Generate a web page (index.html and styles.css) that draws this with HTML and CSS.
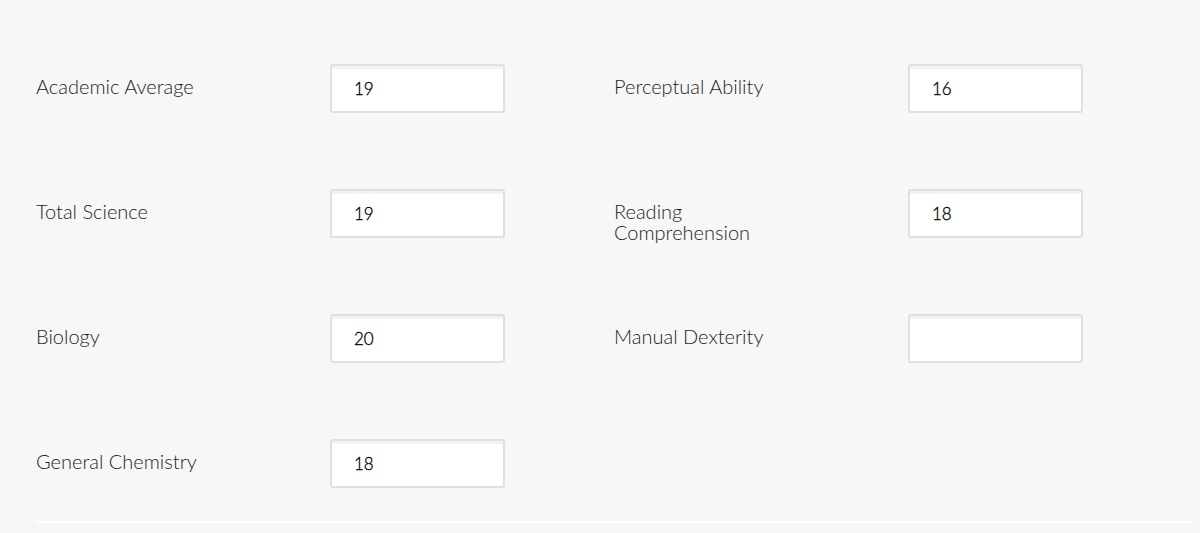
FILE: index.html
```html
<!DOCTYPE html>
<html>
<head>
<meta charset="utf-8">
<link rel="stylesheet" href="styles.css">
</head>
<body>
<div class="panel">
  <div class="grid">
    <div class="field"><label class="label">Academic Average</label><input class="box" type="text" value="19"></div>
    <div class="field"><label class="label">Perceptual Ability</label><input class="box" type="text" value="16"></div>
    <div class="field"><label class="label">Total Science</label><input class="box" type="text" value="19"></div>
    <div class="field"><label class="label">Reading Comprehension</label><input class="box" type="text" value="18"></div>
    <div class="field"><label class="label">Biology</label><input class="box" type="text" value="20"></div>
    <div class="field"><label class="label">Manual Dexterity</label><input class="box" type="text" value=""></div>
    <div class="field"><label class="label">General Chemistry</label><input class="box" type="text" value="18"></div>
  </div>
  <div class="rule"></div>
</div>
</body>
</html>
```
FILE: styles.css
```css
html, body {
  margin: 0;
  padding: 0;
  background: #f7f7f7;
  height: 100%;
  overflow: hidden;
}
.panel {
  padding: 64px 9px 0 36px;
  font-family: Lato, "Noto Sans", sans-serif;
}
.grid {
  display: grid;
  grid-template-columns: 578px 578px;
  row-gap: 76px;
}
.field {
  display: flex;
  align-items: flex-start;
  height: 49px;
}
.label {
  width: 294px;
  padding-right: 110px;
  box-sizing: border-box;
  padding-top: 12px;
  font-size: 20px;
  font-weight: 300;
  line-height: 21px;
  color: #1e1e1e;
}
.box {
  width: 175px;
  height: 49px;
  box-sizing: border-box;
  border: 2px solid #e0e0e0;
  border-radius: 3px;
  background: #fff;
  box-shadow: inset 0 3px 0 #f2f2f2;
  padding: 0 0 0 22px;
  font-family: Lato, "Noto Sans", sans-serif;
  font-size: 17px;
  font-weight: 300;
  color: #000;
  -webkit-text-stroke: 0.3px #000;
  outline: none;
}
.rule {
  margin-top: 33px;
  height: 2px;
  background: #fff;
}
```
